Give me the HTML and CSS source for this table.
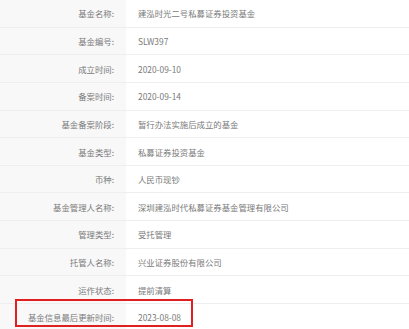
FILE: index.html
```html
<!DOCTYPE html>
<html lang="zh">
<head>
<meta charset="utf-8">
<link rel="stylesheet" href="styles.css">
</head>
<body>
<div class="table">
  <div class="row"><div class="label">基金名称:</div><div class="value">建泓时光二号私募证券投资基金</div></div>
  <div class="row"><div class="label">基金编号:</div><div class="value">SLW397</div></div>
  <div class="row"><div class="label">成立时间:</div><div class="value">2020-09-10</div></div>
  <div class="row"><div class="label">备案时间:</div><div class="value">2020-09-14</div></div>
  <div class="row"><div class="label">基金备案阶段:</div><div class="value">暂行办法实施后成立的基金</div></div>
  <div class="row"><div class="label">基金类型:</div><div class="value">私募证券投资基金</div></div>
  <div class="row"><div class="label">币种:</div><div class="value">人民币现钞</div></div>
  <div class="row"><div class="label">基金管理人名称:</div><div class="value">深圳建泓时代私募证券基金管理有限公司</div></div>
  <div class="row"><div class="label">管理类型:</div><div class="value">受托管理</div></div>
  <div class="row"><div class="label">托管人名称:</div><div class="value">兴业证券股份有限公司</div></div>
  <div class="row"><div class="label">运作状态:</div><div class="value">提前清算</div></div>
  <div class="row"><div class="label">基金信息最后更新时间:</div><div class="value">2023-08-08</div></div>
  <div class="highlight"></div>
</div>
</body>
</html>
```
FILE: styles.css
```css
html, body {
  margin: 0;
  padding: 0;
  background: #fff;
  overflow: hidden;
}
.table {
  position: relative;
  font-family: "Noto Sans CJK SC", "Microsoft YaHei", sans-serif;
  font-size: 8.4px;
  font-weight: 400;
  color: #7a7a7a;
}
.row {
  display: flex;
  height: 27.65px;
  box-sizing: border-box;
  border-bottom: 1px solid #eeeeee;
}
.label {
  width: 126px;
  flex: none;
  box-sizing: border-box;
  background: #f8f8f8;
  text-align: right;
  padding-right: 12px;
  display: flex;
  align-items: center;
  justify-content: flex-end;
}
.value {
  flex: 1;
  padding-left: 12px;
  display: flex;
  align-items: center;
}
.highlight {
  position: absolute;
  left: 15px;
  top: 299px;
  width: 178px;
  height: 28px;
  box-sizing: border-box;
  border: 2px solid #e0201e;
}
```
